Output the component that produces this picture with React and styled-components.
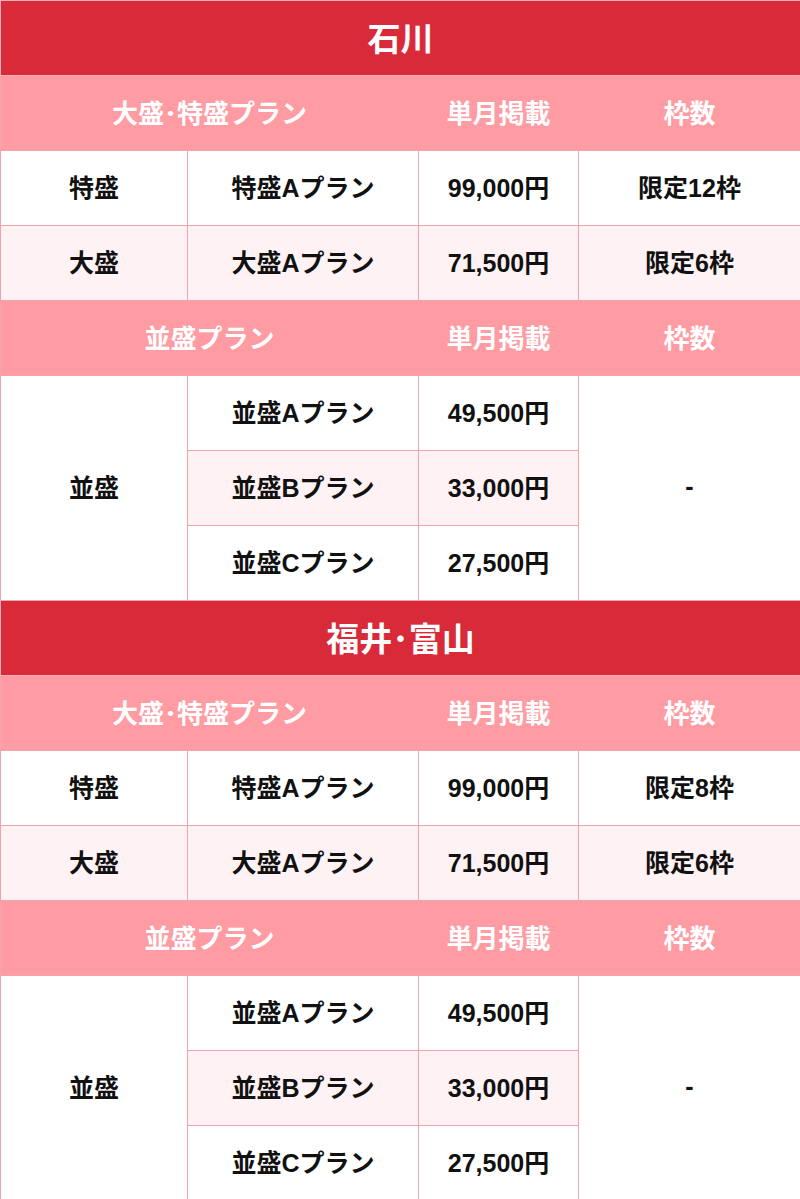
import React from 'react'
import styled, { createGlobalStyle } from 'styled-components'

const GlobalStyle = createGlobalStyle`
  body {
    margin: 0;
    background: #fff;
    font-family: "Liberation Sans", "Noto Sans CJK JP", sans-serif;
  }
`

const Table = styled.table`
  width: 800px;
  table-layout: fixed;
  border-collapse: collapse;
  border: 1px solid #f4b0b6;
`

const Row = styled.tr`
  height: 75px;
`

// all cells share the same centring, only colours differ
const TitleCell = styled.td`
  background: #d92a3a;
  color: #fff;
  font-size: 33px;
  font-weight: 700;
  text-align: center;
  padding: 0 0 3px;
  border: 1px solid #f4b0b6;
`

const HeadCell = styled.td`
  background: #ff9ca3;
  color: #fff;
  font-size: 26px;
  font-weight: 700;
  text-align: center;
  padding: 0 0 4px;
  border: 1px solid #f6a4ab;
`

const Cell = styled.td`
  background: ${p => (p.$alt ? '#fff2f4' : '#fff')};
  color: #111;
  font-size: 25px;
  font-weight: 700;
  text-align: center;
  padding: 0 0 4px;
  border: 1px solid #eda5ad;
`

const regions = [
  {
    name: '石川',
    premium: [
      { size: '特盛', plan: '特盛Aプラン', price: '99,000円', slots: '限定12枠' },
      { size: '大盛', plan: '大盛Aプラン', price: '71,500円', slots: '限定6枠' },
    ],
  },
  {
    name: '福井･富山',
    premium: [
      { size: '特盛', plan: '特盛Aプラン', price: '99,000円', slots: '限定8枠' },
      { size: '大盛', plan: '大盛Aプラン', price: '71,500円', slots: '限定6枠' },
    ],
  },
]

const regularPlans = [
  { plan: '並盛Aプラン', price: '49,500円' },
  { plan: '並盛Bプラン', price: '33,000円' },
  { plan: '並盛Cプラン', price: '27,500円' },
]

function RegionBlock({ region }) {
  return (
    <>
      <Row>
        <TitleCell colSpan={4}>{region.name}</TitleCell>
      </Row>
      <Row>
        <HeadCell colSpan={2}>大盛･特盛プラン</HeadCell>
        <HeadCell>単月掲載</HeadCell>
        <HeadCell>枠数</HeadCell>
      </Row>
      {region.premium.map((p, i) => (
        <Row key={p.plan}>
          <Cell $alt={i % 2 === 1}>{p.size}</Cell>
          <Cell $alt={i % 2 === 1}>{p.plan}</Cell>
          <Cell $alt={i % 2 === 1}>{p.price}</Cell>
          <Cell $alt={i % 2 === 1}>{p.slots}</Cell>
        </Row>
      ))}
      <Row>
        <HeadCell colSpan={2}>並盛プラン</HeadCell>
        <HeadCell>単月掲載</HeadCell>
        <HeadCell>枠数</HeadCell>
      </Row>
      {regularPlans.map((p, i) => (
        <Row key={p.plan}>
          {i === 0 && <Cell rowSpan={3}>並盛</Cell>}
          <Cell $alt={i === 1}>{p.plan}</Cell>
          <Cell $alt={i === 1}>{p.price}</Cell>
          {i === 0 && <Cell rowSpan={3}>-</Cell>}
        </Row>
      ))}
    </>
  )
}

export default function App() {
  return (
    <>
      <GlobalStyle />
      <Table>
        <colgroup>
          <col style={{ width: 187 }} />
          <col style={{ width: 231 }} />
          <col style={{ width: 160 }} />
          <col style={{ width: 222 }} />
        </colgroup>
        <tbody>
          {regions.map(r => (
            <RegionBlock key={r.name} region={r} />
          ))}
        </tbody>
      </Table>
    </>
  )
}
